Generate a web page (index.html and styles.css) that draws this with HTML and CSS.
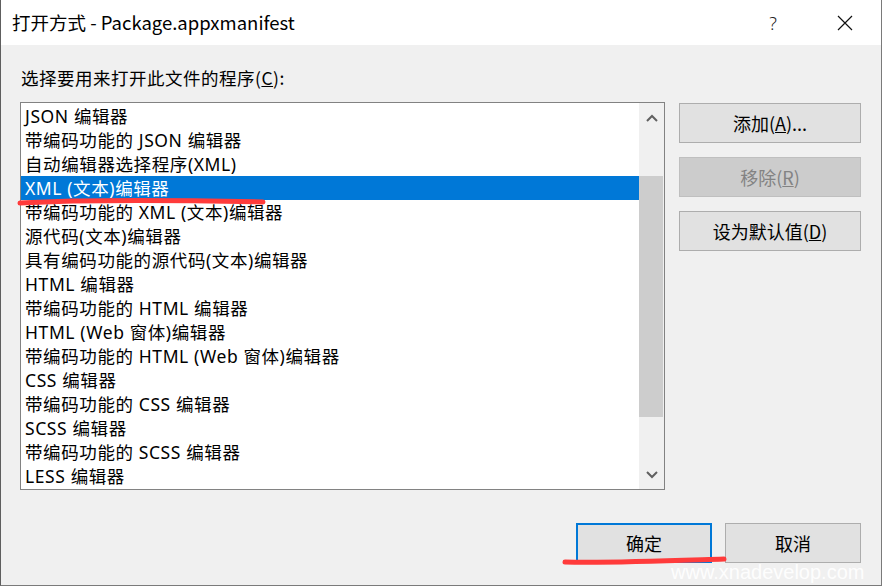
FILE: index.html
```html
<!DOCTYPE html>
<html lang="zh-CN">
<head>
<meta charset="utf-8">
<title>打开方式</title>
<link rel="stylesheet" href="styles.css">
</head>
<body>
<div class="window">
  <div class="titlebar">
    <div class="title">打开方式 - Package.appxmanifest</div>
    <div class="tb-btn help">?</div>
    <div class="tb-btn close">
      <svg width="16" height="16" viewBox="0 0 16 16"><path d="M1 1 L15 15 M15 1 L1 15" stroke="#111" stroke-width="1.2" fill="none"/></svg>
    </div>
  </div>
  <div class="body">
    <div class="label">选择要用来打开此文件的程序(<u>C</u>):</div>
    <div class="main">
      <div class="listbox">
        <div class="items">
          <div class="item">JSON 编辑器</div>
          <div class="item">带编码功能的 JSON 编辑器</div>
          <div class="item">自动编辑器选择程序(XML)</div>
          <div class="item selected">XML (文本)编辑器</div>
          <div class="item">带编码功能的 XML (文本)编辑器</div>
          <div class="item">源代码(文本)编辑器</div>
          <div class="item">具有编码功能的源代码(文本)编辑器</div>
          <div class="item">HTML 编辑器</div>
          <div class="item">带编码功能的 HTML 编辑器</div>
          <div class="item">HTML (Web 窗体)编辑器</div>
          <div class="item">带编码功能的 HTML (Web 窗体)编辑器</div>
          <div class="item">CSS 编辑器</div>
          <div class="item">带编码功能的 CSS 编辑器</div>
          <div class="item">SCSS 编辑器</div>
          <div class="item">带编码功能的 SCSS 编辑器</div>
          <div class="item">LESS 编辑器</div>
        </div>
        <div class="scrollbar">
          <div class="arrow">
            <svg width="12" height="8" viewBox="0 0 12 8"><path d="M1 7 L6 2 L11 7" stroke="#606060" stroke-width="2" fill="none"/></svg>
          </div>
          <div class="track">
            <div class="track-top"></div>
            <div class="thumb"></div>
            <div class="track-rest"></div>
          </div>
          <div class="arrow">
            <svg width="12" height="8" viewBox="0 0 12 8"><path d="M1 1 L6 6 L11 1" stroke="#606060" stroke-width="2" fill="none"/></svg>
          </div>
        </div>
      </div>
      <div class="side">
        <div class="btn">添加(<u>A</u>)...</div>
        <div class="btn disabled">移除(<u>R</u>)</div>
        <div class="btn">设为默认值(<u>D</u>)</div>
      </div>
    </div>
    <div class="footer">
      <div class="btn foot default">确定</div>
      <div class="btn foot">取消</div>
    </div>
  </div>
  <svg class="mark mark-list" width="250" height="12" viewBox="0 0 250 12"><path d="M3 6 C60 3, 150 3, 246 5" stroke="#ff3b3b" stroke-width="5" stroke-linecap="round" fill="none"/></svg>
  <svg class="mark mark-ok" width="165" height="12" viewBox="0 0 165 12"><path d="M3 8 C50 9, 100 7, 162 5" stroke="#ff3b3b" stroke-width="5" stroke-linecap="round" fill="none"/></svg>
  <div class="watermark">www.xnadevelop.com</div>
</div>
</body>
</html>
```
FILE: styles.css
```css
html, body {
  margin: 0;
  padding: 0;
}
body {
  width: 882px;
  height: 586px;
  overflow: hidden;
  font-family: "Noto Sans CJK SC", "Noto Sans", sans-serif;
  color: #000;
}
.window {
  position: relative;
  width: 882px;
  height: 586px;
  box-sizing: border-box;
  border-left: 1px solid #5e5e5e;
  border-right: 1px solid #7a7a7a;
  border-bottom: 1px solid #7a7a7a;
  background: #f0f0f0;
  display: flex;
  flex-direction: column;
}
.titlebar {
  height: 45px;
  background: #fff;
  display: flex;
  align-items: center;
  flex-shrink: 0;
}
.title {
  flex: 1;
  padding-left: 11px;
  font-size: 18.5px;
  line-height: 24px;
  margin-top: -1px;
}
.tb-btn {
  display: flex;
  align-items: center;
  justify-content: center;
}
.help {
  width: 20px;
  font-size: 18px;
  font-family: "Noto Sans", sans-serif;
  font-weight: 300;
  margin-right: 54px;
  color: #222;
}
.close {
  width: 16px;
  margin-right: 28px;
}
.body {
  flex: 1;
  display: flex;
  flex-direction: column;
  padding: 0 20px 0 19px;
}
.label {
  margin-top: 21px;
  font-size: 17.5px;
  line-height: 24px;
  height: 24px;
  padding-left: 1px;
  letter-spacing: 0.5px;
}
.main {
  margin-top: 12px;
  display: flex;
  gap: 14px;
}
.listbox {
  width: 646px;
  height: 388px;
  box-sizing: border-box;
  border: 1px solid #828282;
  background: #fff;
  display: flex;
  overflow: hidden;
}
.items {
  flex: 1;
  padding-top: 1px;
  overflow: hidden;
}
.item {
  height: 24px;
  line-height: 24px;
  font-family: "Noto Sans", "Noto Sans CJK SC", sans-serif;
  font-size: 17.5px;
  letter-spacing: 0.6px;
  padding-left: 4px;
  white-space: nowrap;
}
.item.selected {
  background: #0078d7;
  color: #fff;
}
.scrollbar {
  width: 25px;
  background: #f0f0f0;
  display: flex;
  flex-direction: column;
}
.arrow {
  height: 29px;
  display: flex;
  align-items: center;
  justify-content: center;
  flex-shrink: 0;
}
.track {
  flex: 1;
  display: flex;
  flex-direction: column;
}
.track-top {
  height: 44px;
}
.thumb {
  height: 241px;
  background: #cdcdcd;
  margin-right: 1px;
}
.track-rest {
  flex: 1;
}
.side {
  display: flex;
  flex-direction: column;
  gap: 14px;
  padding-top: 1px;
}
.btn {
  width: 182px;
  height: 40px;
  box-sizing: border-box;
  border: 1px solid #adadad;
  background: #e1e1e1;
  display: flex;
  align-items: center;
  justify-content: center;
  font-size: 18px;
  line-height: 24px;
}
.btn.disabled {
  background: #cccccc;
  border-color: #bfbfbf;
  color: #838383;
}
.footer {
  margin-top: 33px;
  display: flex;
  justify-content: flex-end;
  gap: 13px;
}
.btn.foot {
  width: 136px;
  height: 40px;
}
.btn.default {
  border: 2px solid #0078d7;
}
.mark {
  position: absolute;
}
.mark-list {
  left: 16px;
  top: 197px;
}
.mark-ok {
  left: 561px;
  top: 554px;
}
.watermark {
  position: absolute;
  left: 670px;
  top: 562px;
  font-family: "Liberation Sans", Arial, sans-serif;
  font-size: 20px;
  line-height: 20px;
  color: rgba(255, 255, 255, 0.92);
}
```
